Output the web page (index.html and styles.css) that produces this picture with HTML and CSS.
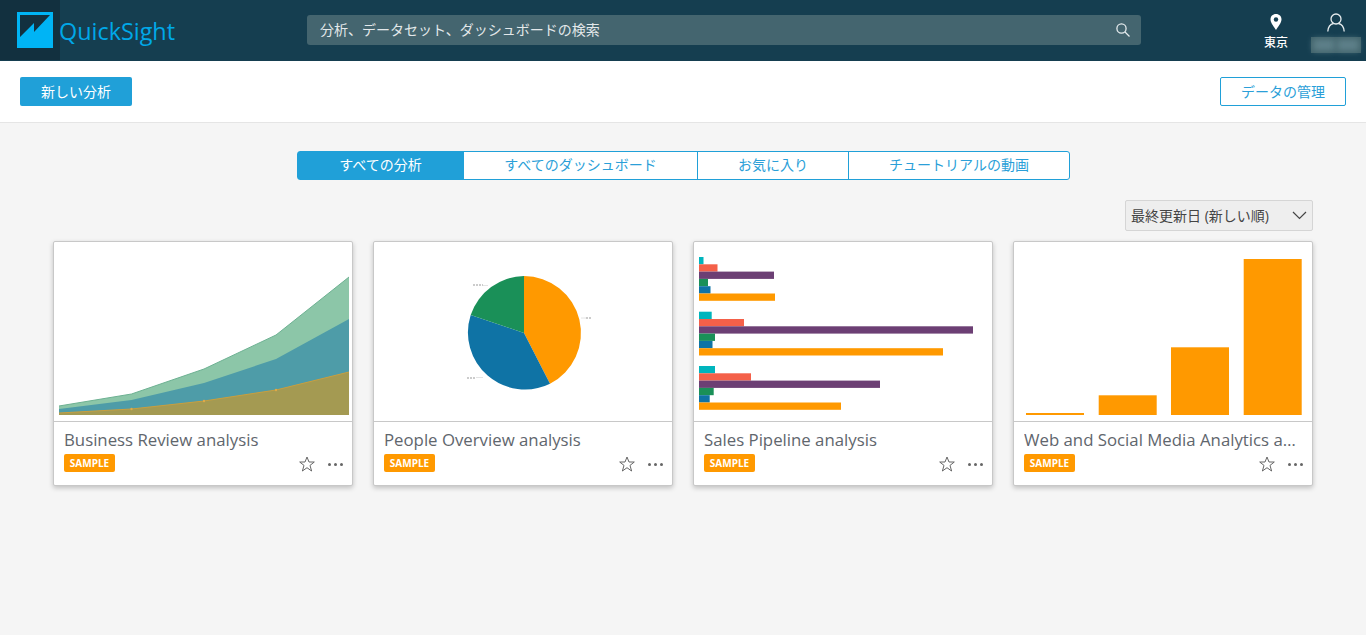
FILE: index.html
```html
<!DOCTYPE html>
<html lang="ja">
<head>
  <meta charset="UTF-8">
  <meta name="viewport" content="width=device-width, initial-scale=1.0">
  <title>QuickSight</title>
  <link rel="stylesheet" href="styles.css">
</head>
<body>
  <header class="topbar">
    <div class="logo-box">
      <svg class="logo" width="36" height="36" viewBox="0 0 36 36">
        <rect width="36" height="36" fill="#00b4f5"/>
        <path d="M3 3H33L17 20V11L3 25Z" fill="#12303f"/>
      </svg>
    </div>
    <div class="brand">QuickSight</div>
    <div class="search">
      <span>分析、データセット、ダッシュボードの検索</span>
      <svg width="16" height="16" viewBox="0 0 16 16" fill="none" stroke="#e6ecee" stroke-width="1.3">
        <circle cx="6.5" cy="6.5" r="4.6"/>
        <path d="M10 10L14.5 14.5"/>
      </svg>
    </div>
    <div class="region">
      <svg width="12" height="16" viewBox="0 0 12 16">
        <path d="M6 0C2.7 0 .5 2.4.5 5.4.5 9 4.500 13 6 16 7.500 13 11.500 9 11.500 5.400 11.500 2.400 9.300 0 6 0Z" fill="#fff"/>
        <circle cx="6" cy="5.500" r="2.200" fill="#153e50"/>
      </svg>
      <span>東京</span>
    </div>
    <div class="user">
      <svg width="18" height="19" viewBox="0 0 18 19" fill="none" stroke="#e6ecee" stroke-width="1.300">
        <circle cx="9" cy="6" r="5"/>
        <path d="M.8 18.500C1.200 13.500 4 11 6.500 10.500M17.200 18.500C16.800 13.500 14 11 11.500 10.500"/>
      </svg>
      <div class="user-name"><i></i><i></i></div>
    </div>
  </header>

  <div class="toolbar">
    <button class="btn btn-primary">新しい分析</button>
    <button class="btn btn-outline">データの管理</button>
  </div>

  <main class="content">
    <nav class="tabs">
      <a class="tab tab-active tab-analyses">すべての分析</a>
      <a class="tab tab-dashboards">すべてのダッシュボード</a>
      <a class="tab tab-favorites">お気に入り</a>
      <a class="tab tab-videos">チュートリアルの動画</a>
    </nav>

    <div class="sort-row">
      <div class="sort">
        <span>最終更新日 (新しい順)</span>
        <svg width="15" height="9" viewBox="0 0 15 9" fill="none" stroke="#444" stroke-width="1.200"><path d="M1 1L7.500 7.500L14 1"/></svg>
      </div>
    </div>

    <div class="cards">
      <article class="card">
        <svg class="thumb" width="298" height="179" viewBox="0 0 298 179">
          <polygon points="5,164 77.500,152 150,127 222,93 295,35 295,173 5,173" fill="#8cc6a8"/>
          <polyline points="5,164 77.500,152 150,127 222,93 295,35" fill="none" stroke="#6db192" stroke-width="1"/>
          <polygon points="5,167 77.500,158 150,141 222,117 295,77 295,173 5,173" fill="#4e9ca8"/>
          <polygon points="5,171 77.500,167 150,159 222,148 295,130 295,173 5,173" fill="#a49a52"/>
          <polyline points="5,171 77.500,167 150,159 222,148 295,130" fill="none" stroke="#c99f3e" stroke-width="1"/>
          <circle cx="77.500" cy="167" r="1.200" fill="#e0a948"/>
          <circle cx="150" cy="159" r="1.200" fill="#e0a948"/>
          <circle cx="222" cy="148" r="1.200" fill="#e0a948"/>
        </svg>
        <div class="card-info">
          <h3 class="card-title">Business Review analysis</h3>
          <div class="card-meta">
            <span class="badge">SAMPLE</span>
            <span class="actions">
              <svg width="16" height="16" viewBox="0 0 16 16"><path d="M8 1L10 6H15.300L11 9.400L12.600 15L8 11.700L3.400 15L5 9.400L.7 6H6Z" fill="none" stroke="#666" stroke-width="1"/></svg>
              <span class="dots"><i></i><i></i><i></i></span>
            </span>
          </div>
        </div>
      </article>

      <article class="card">
        <svg class="thumb" width="298" height="179" viewBox="0 0 298 179">
          <path d="M150 91V34A57 57 0 0 1 176 141.700Z" fill="#ff9900"/>
          <path d="M150 91L176 141.700A57 57 0 0 1 96.700 73Z" fill="#0f73a5"/>
          <path d="M150 91L96.700 73A57 57 0 0 1 150 34Z" fill="#1a9058"/>
          <path d="M109 43.500H114M207 76H212M102 135.500H109" stroke="#e4e4e4" stroke-width="1"/>
          <path d="M99 43H109M212 76H217M93 136H102" stroke="#ccc" stroke-width="2" stroke-dasharray="2 1"/>
        </svg>
        <div class="card-info">
          <h3 class="card-title">People Overview analysis</h3>
          <div class="card-meta">
            <span class="badge">SAMPLE</span>
            <span class="actions">
              <svg width="16" height="16" viewBox="0 0 16 16"><path d="M8 1L10 6H15.300L11 9.400L12.600 15L8 11.700L3.400 15L5 9.400L.7 6H6Z" fill="none" stroke="#666" stroke-width="1"/></svg>
              <span class="dots"><i></i><i></i><i></i></span>
            </span>
          </div>
        </div>
      </article>

      <article class="card">
        <svg class="thumb" width="298" height="179" viewBox="0 0 298 179">
          <rect x="5" y="15" width="4.500" height="7.300" fill="#00b5bd"/>
          <rect x="5" y="22.300" width="18.500" height="7.300" fill="#f46049"/>
          <rect x="5" y="29.600" width="75" height="7.300" fill="#6c3f74"/>
          <rect x="5" y="36.900" width="9" height="7.300" fill="#1a9058"/>
          <rect x="5" y="44.200" width="11.500" height="7.300" fill="#0f73a5"/>
          <rect x="5" y="51.500" width="76" height="7.300" fill="#ff9900"/>
          <rect x="5" y="69.700" width="12.700" height="7.300" fill="#00b5bd"/>
          <rect x="5" y="77" width="45" height="7.300" fill="#f46049"/>
          <rect x="5" y="84.300" width="274" height="7.300" fill="#6c3f74"/>
          <rect x="5" y="91.600" width="16" height="7.300" fill="#1a9058"/>
          <rect x="5" y="98.900" width="13.500" height="7.300" fill="#0f73a5"/>
          <rect x="5" y="106.200" width="244" height="7.300" fill="#ff9900"/>
          <rect x="5" y="124" width="16" height="7.300" fill="#00b5bd"/>
          <rect x="5" y="131.300" width="52" height="7.300" fill="#f46049"/>
          <rect x="5" y="138.600" width="181" height="7.300" fill="#6c3f74"/>
          <rect x="5" y="145.900" width="14.700" height="7.300" fill="#1a9058"/>
          <rect x="5" y="153.200" width="10.700" height="7.300" fill="#0f73a5"/>
          <rect x="5" y="160.500" width="142" height="7.300" fill="#ff9900"/>
        </svg>
        <div class="card-info">
          <h3 class="card-title">Sales Pipeline analysis</h3>
          <div class="card-meta">
            <span class="badge">SAMPLE</span>
            <span class="actions">
              <svg width="16" height="16" viewBox="0 0 16 16"><path d="M8 1L10 6H15.300L11 9.400L12.600 15L8 11.700L3.400 15L5 9.400L.7 6H6Z" fill="none" stroke="#666" stroke-width="1"/></svg>
              <span class="dots"><i></i><i></i><i></i></span>
            </span>
          </div>
        </div>
      </article>

      <article class="card">
        <svg class="thumb" width="298" height="179" viewBox="0 0 298 179">
          <rect x="12" y="171" width="58" height="2" fill="#ff9900"/>
          <rect x="84.700" y="153.300" width="58" height="19.700" fill="#ff9900"/>
          <rect x="157" y="105.300" width="58" height="67.700" fill="#ff9900"/>
          <rect x="229.700" y="17" width="58" height="156" fill="#ff9900"/>
        </svg>
        <div class="card-info">
          <h3 class="card-title">Web and Social Media Analytics analysis</h3>
          <div class="card-meta">
            <span class="badge">SAMPLE</span>
            <span class="actions">
              <svg width="16" height="16" viewBox="0 0 16 16"><path d="M8 1L10 6H15.300L11 9.400L12.600 15L8 11.700L3.400 15L5 9.400L.7 6H6Z" fill="none" stroke="#666" stroke-width="1"/></svg>
              <span class="dots"><i></i><i></i><i></i></span>
            </span>
          </div>
        </div>
      </article>
    </div>
  </main>
</body>
</html>
```

FILE: styles.css
```css
* {
  box-sizing: border-box;
}

body {
  margin: 0;
  min-height: 635px;
  background-color: #f5f5f5;
  font-family: "Open Sans", "Noto Sans CJK JP", sans-serif;
  color: #545b64;
  overflow: hidden;
}

.topbar {
  display: flex;
  align-items: flex-start;
  height: 61px;
  background-color: #153e50;
}

.logo-box {
  width: 60px;
  height: 60px;
  padding: 12px 0 0 17px;
  background-color: #12303f;
}

.logo {
  display: block;
}

.brand {
  width: 247px;
  font-size: 23.4px;
  line-height: 62px;
  color: #00a8e8;
  margin-left: -1px;
  margin-right: 1px;
}

.search {
  display: flex;
  justify-content: space-between;
  align-items: center;
  width: 834px;
  height: 30px;
  margin-top: 15px;
  padding: 0 10px 0 13px;
  background-color: #44656f;
  border-radius: 3px;
  font-size: 14px;
  color: #e3e8ea;
}

.search span {
  margin-top: -2px;
}

.region {
  display: flex;
  flex-direction: column;
  align-items: center;
  gap: 3px;
  width: 48px;
  margin: 14px 0 0 111px;
  font-size: 12px;
  font-weight: 500;
  line-height: 20px;
  color: #fff;
}

.user {
  display: flex;
  flex-direction: column;
  align-items: center;
  width: 50px;
  margin: 13px 0 0 11px;
}

.user-name {
  display: flex;
  gap: 2px;
  width: 50px;
  height: 16px;
  margin-top: 5px;
  padding: 2px;
  background-color: #48696f;
  opacity: 0.85;
}

.user-name i {
  flex: 1;
  background-color: #6b8c94;
  filter: blur(3px);
}

.toolbar {
  display: flex;
  justify-content: space-between;
  align-items: center;
  height: 62px;
  padding: 0 20px;
  background-color: #fff;
  border-bottom: 1px solid #e5e5e5;
}

.btn {
  height: 29px;
  padding: 0 0 2px;
  border-radius: 2px;
  font-family: inherit;
  font-size: 14px;
  cursor: pointer;
}

.btn-primary {
  width: 112px;
  background-color: #20a0d8;
  border: none;
  color: #fff;
}

.btn-outline {
  width: 126px;
  background-color: #fff;
  border: 1px solid #20a0d8;
  color: #2b9fd8;
}

.content {
  padding: 28px 53px 0;
}

.tabs {
  display: flex;
  width: 773px;
  height: 29px;
  margin-left: 244px;
  border: 1px solid #20a0d8;
  border-radius: 3px;
  background-color: #fff;
  font-size: 14px;
  line-height: 26px;
  text-align: center;
  color: #2b9fd8;
}

.tab {
  border-left: 1px solid #20a0d8;
}

.tab-active {
  border-left: none;
  background-color: #20a0d8;
  color: #fff;
}

.tab-analyses {
  width: 165px;
}

.tab-dashboards {
  width: 234px;
}

.tab-favorites {
  width: 151px;
}

.tab-videos {
  flex: 1;
}

.sort-row {
  display: flex;
  justify-content: flex-end;
  margin-top: 20px;
}

.sort {
  display: flex;
  justify-content: space-between;
  align-items: center;
  width: 188px;
  height: 31px;
  padding: 0 5px;
  background-color: #eee;
  border: 1px solid #d5d5d5;
  border-radius: 2px;
  font-size: 14px;
  color: #444;
}

.sort span {
  margin-top: -2px;
}

.cards {
  display: flex;
  gap: 20px;
  margin-top: 10px;
}

.card {
  width: 300px;
  height: 245px;
  background-color: #fff;
  border: 1px solid #c8c8c8;
  border-radius: 2px;
  box-shadow: 0 2px 5px rgba(0, 0, 0, 0.22);
}

.thumb {
  display: block;
}

.card-info {
  height: 64px;
  padding: 6px 10px 0;
  border-top: 1px solid #c8c8c8;
}

.card-title {
  margin: 0;
  overflow: hidden;
  font-size: 16.8px;
  font-weight: 400;
  line-height: 24px;
  white-space: nowrap;
  text-overflow: ellipsis;
  color: #5f666d;
}

.card-meta {
  display: flex;
  justify-content: space-between;
  align-items: center;
  margin-top: 2px;
}

.badge {
  width: 51px;
  height: 18px;
  background-color: #ff9900;
  border-radius: 2px;
  font-size: 10px;
  font-weight: 700;
  line-height: 18px;
  text-align: center;
  color: #fff;
}

.actions {
  display: flex;
  align-items: center;
  gap: 13px;
  margin: 2px -1px 0 0;
}

.actions svg {
  display: block;
}

.dots {
  display: flex;
  gap: 3px;
}

.dots i {
  width: 3px;
  height: 3px;
  border-radius: 50%;
  background-color: #666;
}
```
